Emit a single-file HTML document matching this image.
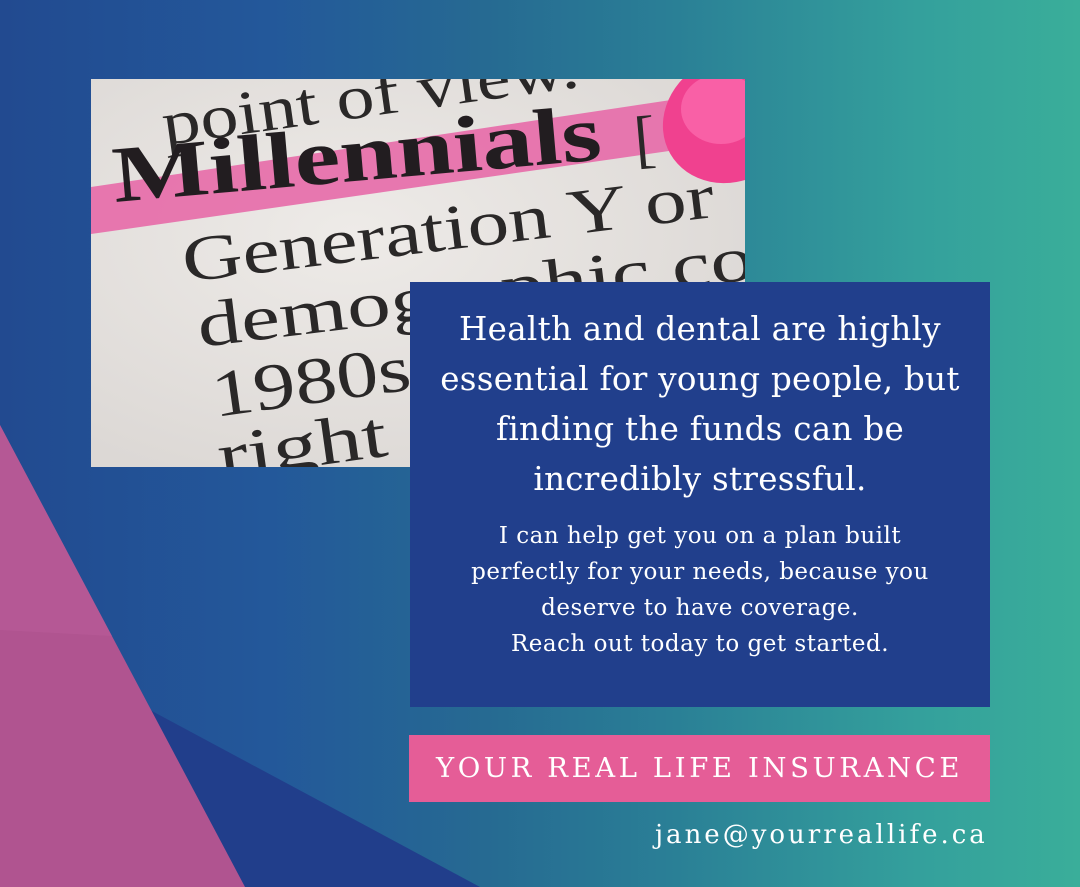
<!DOCTYPE html>
<html><head><meta charset="utf-8"><style>
html,body{margin:0;padding:0}
body{width:1080px;height:887px;position:relative;overflow:hidden;font-family:"DejaVu Serif","Liberation Serif",serif;
background:linear-gradient(90deg,#224a90 0%,#23589a 25%,#266a92 45%,#2a7f96 62%,#34a09c 85%,#3aae9a 100%);}
.photo{position:absolute;left:91px;top:79px;width:654px;height:388px;overflow:hidden;
background:radial-gradient(ellipse at 40% 40%,#eeebe8,#dcd8d5 80%);}
.box{position:absolute;left:410px;top:282px;width:580px;height:425px;background:#213f8c;color:#fff;text-align:center;}
.h{font-size:32.5px;line-height:50px;margin-top:22px;letter-spacing:0.3px;white-space:nowrap}
.s{font-size:23px;line-height:36px;margin-top:14px;letter-spacing:0.5px;white-space:nowrap}
.btn{position:absolute;left:409px;top:735px;width:581px;height:67px;background:#e55d97;color:#fff;font-size:27.5px;letter-spacing:3.6px;text-align:center;line-height:67px;white-space:nowrap}
.mail{position:absolute;left:655px;top:820px;color:#fff;font-size:26px;letter-spacing:3px;white-space:nowrap}
</style></head><body>
<svg width="1080" height="887" style="position:absolute;left:0;top:0">
<polygon points="150,710 480,887 0,887 0,887" fill="#213e8b"/>
<polygon points="0,425 245,887 0,887" fill="#b05490"/>
<polygon points="0,425 112,636 0,630" fill="#b95c99" opacity=".6"/>
</svg>
<div class="photo">
<svg width="654" height="388" style="position:absolute;left:0;top:0;font-family:'Liberation Serif',serif">
<polygon points="0,108 600,18 620,66 0,155" fill="#e76aa8" opacity=".9"/>
<g fill="#2a2828">
<text x="74" y="66" font-size="62" transform="rotate(-8 74 66)" textLength="420" lengthAdjust="spacingAndGlyphs">point of view.</text>
<text x="24" y="123" font-size="80" font-weight="bold" fill="#221d20" transform="rotate(-5 24 123)" textLength="490" lengthAdjust="spacingAndGlyphs">Millennials</text>
<text x="545" y="82" font-size="64" transform="rotate(-5 545 82)">[</text>
<text x="94" y="203" font-size="64" transform="rotate(-7 94 203)" textLength="535" lengthAdjust="spacingAndGlyphs">Generation Y or</text>
<text x="109" y="268" font-size="64" transform="rotate(-7 109 268)" textLength="560" lengthAdjust="spacingAndGlyphs">demographic co</text>
<text x="124" y="338" font-size="66" transform="rotate(-8 124 338)" textLength="200" lengthAdjust="spacingAndGlyphs">1980s</text>
<text x="130" y="400" font-size="66" transform="rotate(-8 130 400)" textLength="170" lengthAdjust="spacingAndGlyphs">right</text>
</g>
<ellipse cx="640" cy="40" rx="70" ry="62" fill="#f0418f" transform="rotate(-30 640 40)"/>
<ellipse cx="630" cy="30" rx="40" ry="35" fill="#ff75b5" opacity=".6"/>
</svg>
</div>
<div class="box">
<div class="h">Health and dental are highly<br>essential for young people, but<br>finding the funds can be<br>incredibly stressful.</div>
<div class="s">I can help get you on a plan built<br>perfectly for your needs, because you<br>deserve to have coverage.<br>Reach out today to get started.</div>
</div>
<div class="btn">YOUR REAL LIFE INSURANCE</div>
<div class="mail">jane@yourreallife.ca</div>
</body></html>
